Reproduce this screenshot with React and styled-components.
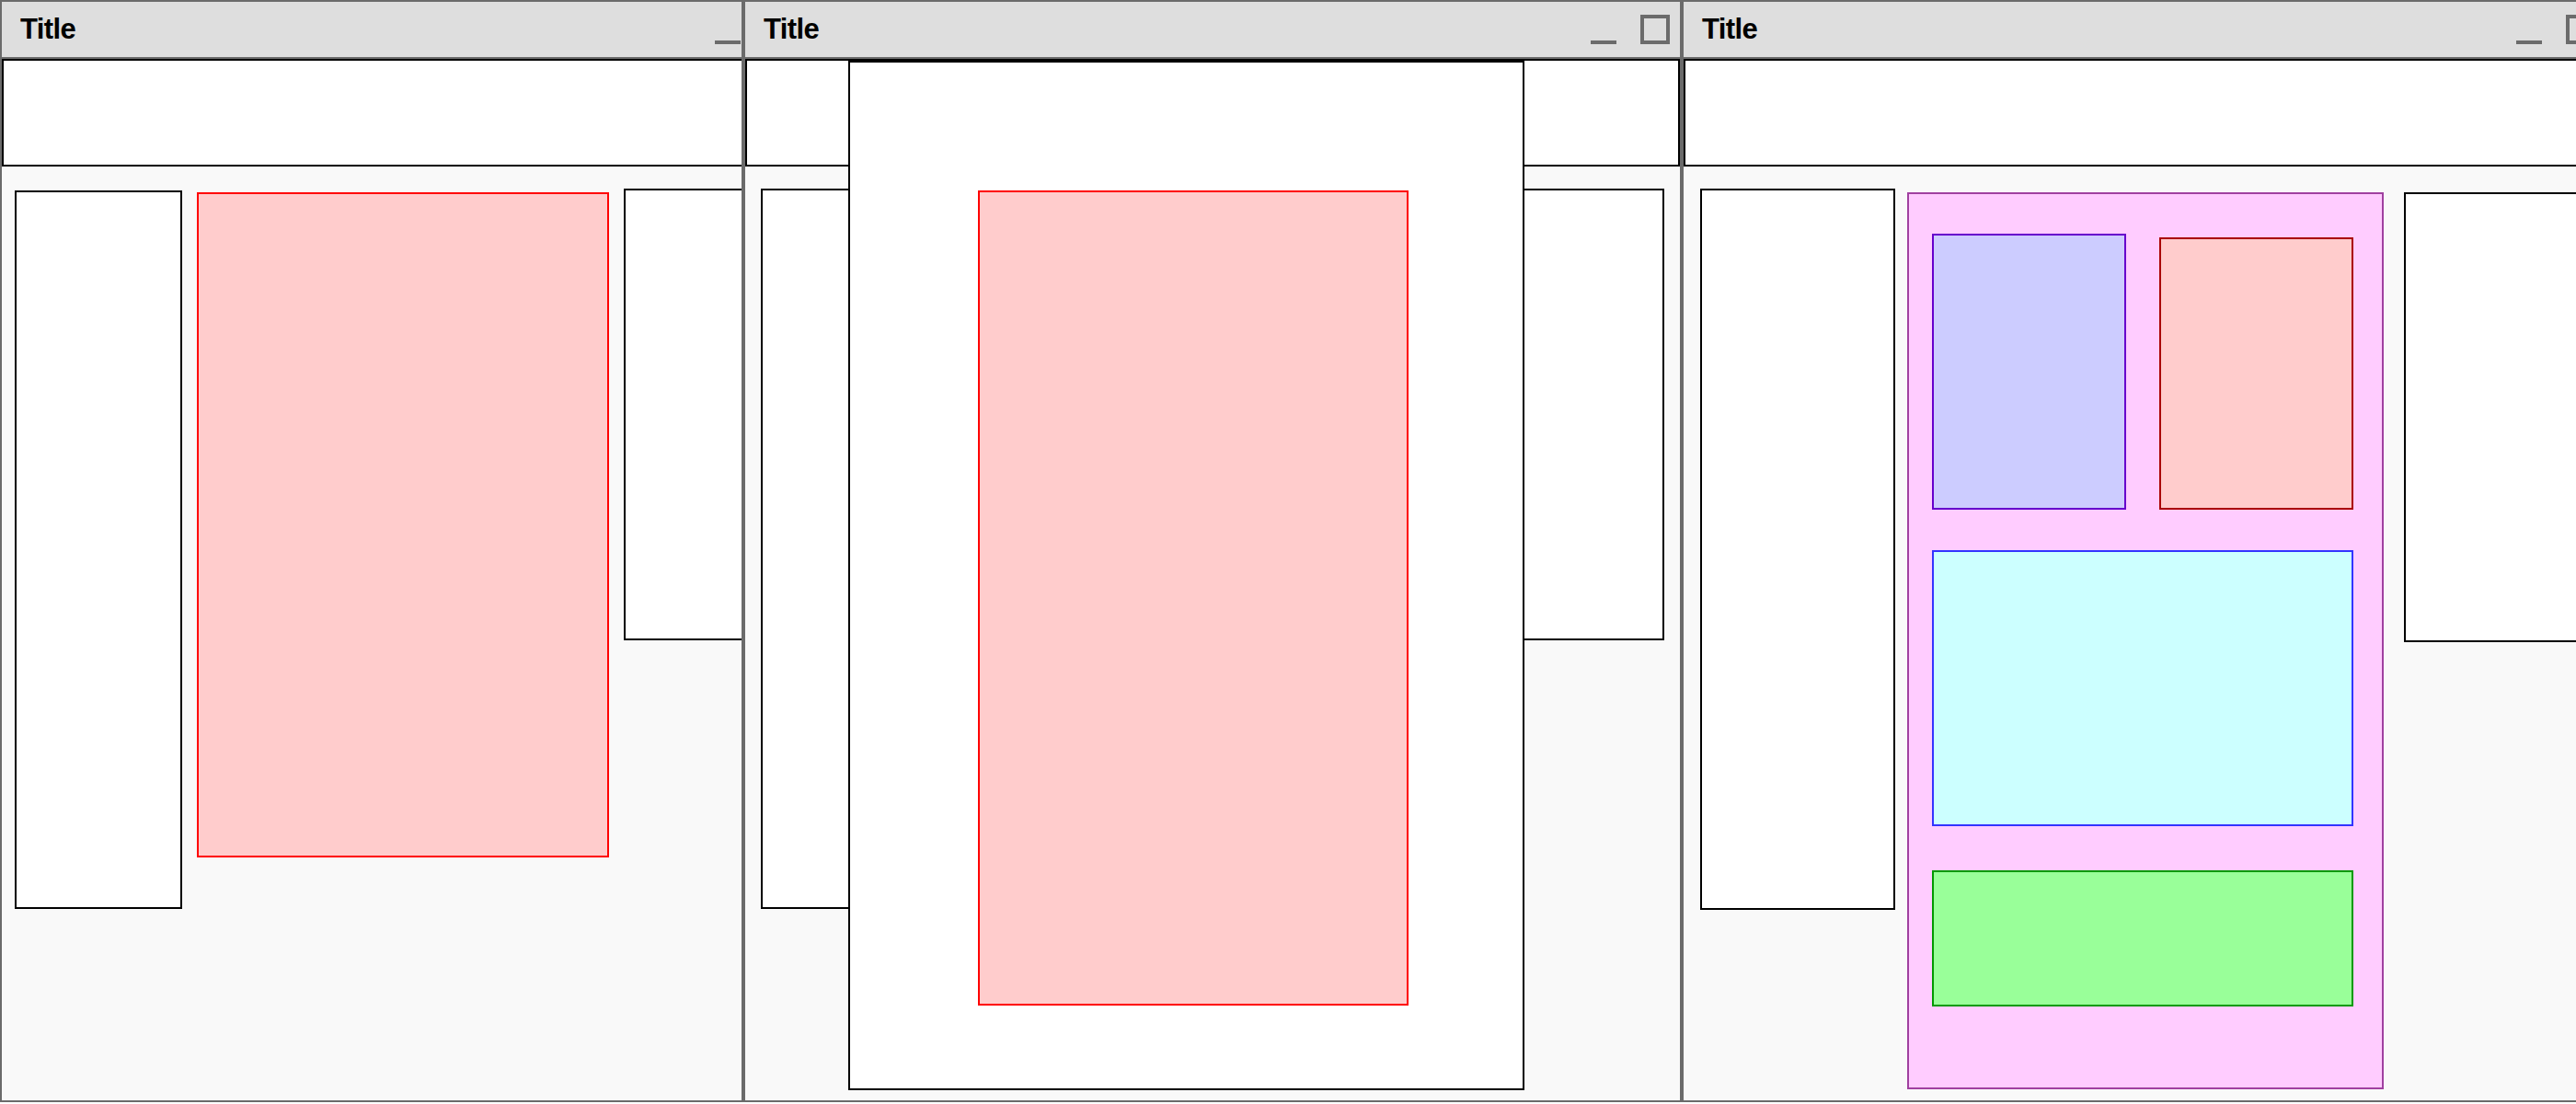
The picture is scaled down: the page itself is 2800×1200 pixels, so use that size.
import React from "react";
import styled, { createGlobalStyle } from "styled-components";

const GlobalStyle = createGlobalStyle`
  html, body {
    margin: 0;
    padding: 0;
    overflow: hidden;
    background: #ffffff;
  }
  body {
    font-family: "Liberation Sans", Arial, sans-serif;
  }
`;

const Desk = styled.div`
  display: flex;
  align-items: flex-start;
  width: 2800px;
  height: 1200px;
  overflow: hidden;
`;

const Window = styled.div`
  position: relative;
  flex: none;
  box-sizing: border-box;
  width: ${(p) => p.$width}px;
  height: 1198px;
  border: 2px solid #6b6b6b;
  background: #f9f9f9;
  overflow: hidden;
`;

// min-width lets a narrow window clip its own contents on the right
const Inner = styled.div`
  display: flex;
  flex-direction: column;
  height: 100%;
  min-width: ${(p) => p.$min || 0}px;
`;

const TitleBar = styled.div`
  flex: none;
  box-sizing: border-box;
  height: 62px;
  display: flex;
  align-items: flex-start;
  padding: 14px 11px 0 20px;
  background: #dedede;
  border-bottom: 2px solid #6b6b6b;
`;

const Title = styled.div`
  flex: 1;
  font-size: 31px;
  line-height: 31px;
  font-weight: bold;
  letter-spacing: -0.6px;
  color: #000;
`;

const Minimize = styled.div`
  width: 28px;
  height: 4px;
  margin-top: 28px;
  background: #6b6b6b;
`;

const Maximize = styled.div`
  box-sizing: border-box;
  width: 32px;
  height: 32px;
  margin-left: 26px;
  border: 4px solid #6b6b6b;
`;

const Header = styled.div`
  flex: none;
  box-sizing: border-box;
  height: 117px;
  background: #ffffff;
  border: 2px solid #000000;
`;

const Body = styled.div`
  flex: 1;
  display: flex;
  align-items: flex-start;
  padding: 24px ${(p) => p.$pad}px 0;
  gap: ${(p) => p.$gap || 16}px;
`;

const Column = styled.div`
  flex: none;
  box-sizing: border-box;
  width: ${(p) => p.$width}px;
  height: ${(p) => p.$height}px;
  margin-top: ${(p) => p.$top || 0}px;
  margin-left: ${(p) => p.$left || 0}px;
  background: #ffffff;
  border: 2px solid #000000;
`;

const Panel = styled.div`
  box-sizing: border-box;
  flex: ${(p) => (p.$width ? "none" : 1)};
  width: ${(p) => (p.$width ? `${p.$width}px` : "auto")};
  height: ${(p) => p.$height}px;
  margin-top: ${(p) => p.$top || 0}px;
  background: ${(p) => p.$fill};
  border: 2px solid ${(p) => p.$line};
`;

const Container = styled.div`
  flex: none;
  box-sizing: border-box;
  width: 518px;
  height: 975px;
  margin-top: 4px;
  padding: 43px 31px 0 25px;
  display: grid;
  grid-template-columns: 1fr 1fr;
  grid-template-rows: 300px 300px 152px;
  column-gap: 36px;
  row-gap: 44px;
  background: #ffccff;
  border: 2px solid #a040a0;
`;

const Tile = styled.div`
  box-sizing: border-box;
  grid-column: ${(p) => (p.$wide ? "1 / 3" : "auto")};
  margin-top: ${(p) => p.$top || 0}px;
  background: ${(p) => p.$fill};
  border: 2px solid ${(p) => p.$line};
`;

const Modal = styled.div`
  position: absolute;
  left: 112px;
  top: 64px;
  box-sizing: border-box;
  width: 735px;
  height: 1119px;
  padding: 139px 0 0 139px;
  background: #ffffff;
  border: 2px solid #000000;
`;

const ModalBox = styled.div`
  box-sizing: border-box;
  width: 468px;
  height: 886px;
  background: #ffcccc;
  border: 2px solid #ff0000;
`;

const Chrome = () => (
  <>
    <TitleBar>
      <Title>Title</Title>
      <Minimize />
      <Maximize />
    </TitleBar>
    <Header />
  </>
);

export default function App() {
  return (
    <>
      <GlobalStyle />
      <Desk>
        <Window $width={808}>
          <Inner $min={872}>
            <Chrome />
            <Body $pad={14}>
              <Column $width={182} $height={781} $top={2} />
              <Panel $height={723} $top={4} $fill="#ffcccc" $line="#ff0000" />
              <Column $width={182} $height={491} />
            </Body>
          </Inner>
        </Window>

        <Window $width={1020}>
          <Inner>
            <Chrome />
            <Body $pad={17}>
              <Column $width={182} $height={783} />
              <Panel $height={723} $top={4} $fill="#ffcccc" $line="#ff0000" />
              <Column $width={182} $height={491} />
            </Body>
          </Inner>
          <Modal>
            <ModalBox />
          </Modal>
        </Window>

        <Window $width={1006}>
          <Inner>
            <Chrome />
            <Body $pad={18} $gap={13}>
              <Column $width={212} $height={784} />
              <Container>
                <Tile $fill="#ccccff" $line="#6600cc" />
                <Tile $top={4} $fill="#ffcccc" $line="#aa0000" />
                <Tile $wide $fill="#ccffff" $line="#3333ff" />
                <Tile $wide $top={4} $fill="#99ff99" $line="#009900" />
              </Container>
              <Column $width={212} $height={489} $top={4} $left={9} />
            </Body>
          </Inner>
        </Window>
      </Desk>
    </>
  );
}
